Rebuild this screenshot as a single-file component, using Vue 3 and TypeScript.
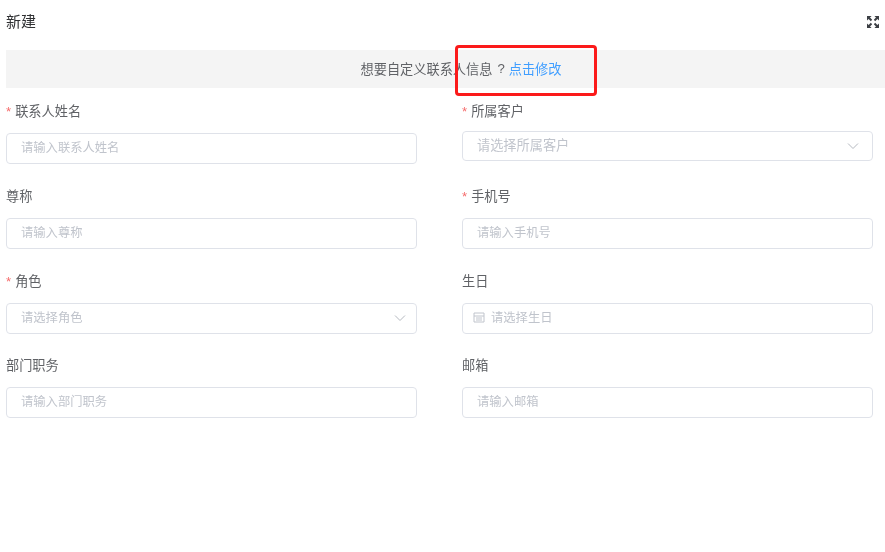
<script setup lang="ts">
interface Field {
  label: string
  placeholder: string
  required?: boolean
  kind?: 'select' | 'date'
  raised?: boolean
}
const fields: Field[] = [
  { label: '联系人姓名', placeholder: '请输入联系人姓名', required: true },
  { label: '所属客户', placeholder: '请选择所属客户', required: true, kind: 'select', raised: true },
  { label: '尊称', placeholder: '请输入尊称' },
  { label: '手机号', placeholder: '请输入手机号', required: true },
  { label: '角色', placeholder: '请选择角色', required: true, kind: 'select' },
  { label: '生日', placeholder: '请选择生日', kind: 'date' },
  { label: '部门职务', placeholder: '请输入部门职务' },
  { label: '邮箱', placeholder: '请输入邮箱' },
]
</script>

<template>
  <div class="page">
    <div class="content">
      <header class="head">
        <span class="title">新建</span>
        <svg class="expand" width="14" height="14" viewBox="0 0 14 14" aria-hidden="true">
          <path d="M1 1h4.600L4 2.600l2.200 2.200-1.400 1.400L2.600 4 1 5.600zM13 1v4.600L11.400 4 9.200 6.200 7.800 4.800 10 2.600 8.400 1zM1 13V8.400L2.600 10l2.200-2.200 1.400 1.400L4 11.400 5.600 13zM13 13H8.400L10 11.400 7.800 9.200l1.400-1.400 2.200 2.200L13 8.400z" fill="#3c3f44" />
        </svg>
      </header>
      <div class="banner">
        <span>想要自定义联系人信息</span><span class="q">?</span><a class="link">点击修改</a>
      </div>
      <div class="form">
        <div v-for="f in fields" :key="f.label" class="field">
          <label class="label" :class="{ raised: f.raised }">
            <span v-if="f.required" class="star">*</span>{{ f.label }}
          </label>
          <div class="control" :class="{ raised: f.raised }">
            <svg v-if="f.kind === 'date'" class="cal" width="12" height="12" viewBox="0 0 12 12" aria-hidden="true">
              <path d="M1 2h10v9H1zM1 5h10M3 7h6M3 9h6" fill="none" stroke="#c0c4cc" stroke-width="1" />
            </svg>
            <span class="ph">{{ f.placeholder }}</span>
            <svg v-if="f.kind === 'select'" class="arrow" width="12" height="8" viewBox="0 0 12 8" aria-hidden="true">
              <path d="M1 1.500l5 5 5-5" fill="none" stroke="#b4b8bf" stroke-width="1" />
            </svg>
          </div>
        </div>
      </div>
    </div>
    <div class="mark"></div>
  </div>
</template>

<style>
html, body { margin: 0; background: #fff; }
</style>

<style scoped>
.page {
  position: relative;
  width: 885px;
  height: 552px;
  overflow: hidden;
  font-family: "Liberation Sans", "Noto Sans CJK SC", sans-serif;
  background: #fff;
}
.content {
  padding-left: 6px;
  filter: blur(0.35px);
}
.head {
  height: 50px;
  display: flex;
  justify-content: space-between;
  align-items: flex-start;
  padding-right: 5px;
  box-sizing: border-box;
}
.title {
  margin-top: 12px;
  font-size: 15px;
  line-height: 20px;
  color: #303133;
}
.expand { margin-top: 15px; }
.banner {
  height: 38px;
  background: #f4f4f4;
  display: flex;
  justify-content: center;
  align-items: center;
  font-size: 13.2px;
  color: #606266;
  padding-left: 31px;
  padding-bottom: 2px;
  box-sizing: border-box;
}
.q { margin: 0 4px 0 5px; }
.link { color: #409eff; }
.form {
  display: grid;
  grid-template-columns: 410.5px 410.5px;
  column-gap: 45.5px;
  row-gap: 20.8px;
  margin-top: 12px;
}
.field { display: flex; flex-direction: column; }
.label {
  height: 22px;
  line-height: 24px;
  margin-bottom: 11px;
  font-size: 13.2px;
  color: #606266;
}
.label.raised { margin-bottom: 9px; }
.star { color: #f56c6c; margin-right: 4px; }
.control {
  height: 31px;
  box-sizing: border-box;
  border: 1px solid #dfe2e9;
  border-radius: 4px;
  display: flex;
  align-items: center;
  padding: 0 15px 3px 14px;
  font-size: 12.3px;
  color: #c0c4cc;
}
.control.raised { height: 30px; font-size: 13.2px; }
.ph { flex: 1; }
.cal { margin: 1px 6px 0 -4px; }
.arrow { margin: 3px -5px 0 0; }
.control.raised .arrow { margin: 2px -2px 0 0; }
.mark {
  position: absolute;
  left: 455px;
  top: 45px;
  width: 142px;
  height: 51px;
  box-sizing: border-box;
  border: 3.5px solid #fb1a1a;
  border-radius: 4px;
}
</style>
